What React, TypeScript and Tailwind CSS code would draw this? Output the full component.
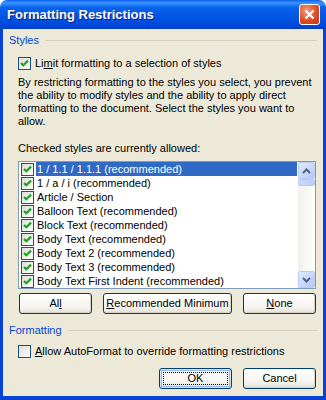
import React from 'react';

const styleRows = [
  '1 / 1.1 / 1.1.1 (recommended)',
  '1 / a / i (recommended)',
  'Article / Section',
  'Balloon Text (recommended)',
  'Block Text (recommended)',
  'Body Text (recommended)',
  'Body Text 2 (recommended)',
  'Body Text 3 (recommended)',
  'Body Text First Indent (recommended)',
];

const CheckBox = ({ checked }: { checked: boolean }) => (
  <span className="flex h-[13px] w-[13px] shrink-0 items-center justify-center border border-[#1C5180] bg-[linear-gradient(135deg,#DCDCD7,#ffffff)]">
    {checked ? (
      <svg width="11" height="11" viewBox="0 0 11 11">
        <path d="M2 5 L4.3 7.3 L9 2.6" fill="none" stroke="#21A121" strokeWidth="2.2" />
      </svg>
    ) : null}
  </span>
);

const GroupHeader = ({ label, className }: { label: string; className?: string }) => (
  <div className={`flex h-[13px] items-center ${className ?? ''}`}>
    <span className="leading-[13px] text-[#0046D5]">{label}</span>
    <span className="ml-[6px] h-px flex-1 bg-[#D0D0BF]" />
  </div>
);

const Button = ({ children, width, focused }: { children: React.ReactNode; width: string; focused?: boolean }) => (
  <button
    className={`relative flex h-[21px] ${width} items-center justify-center rounded-[3px] border border-[#003C74] bg-[linear-gradient(to_bottom,#ffffff,#F4F3EE_70%,#E3E1D6)] text-black ${
      focused ? 'shadow-[inset_0_0_0_1px_#CEE7FF,inset_0_0_0_2px_#95B6EE]' : 'shadow-[inset_-1px_-1px_0_#D6D0C5]'
    }`}
  >
    {focused ? <span className="absolute inset-[3px] border border-dotted border-black" /> : null}
    <span className="relative leading-[13px]">{children}</span>
  </button>
);

const ArrowBtn = ({ up }: { up: boolean }) => (
  <div className="flex h-[17px] w-[17px] items-center justify-center rounded-[2px] border border-[#B7CBF5] bg-[linear-gradient(135deg,#E1EAFE,#B5C8F7)]">
    <svg width="9" height="6" viewBox="0 0 9 6">
      <path d={up ? 'M1 5 L4.5 1.5 L8 5' : 'M1 1 L4.5 4.5 L8 1'} fill="none" stroke="#4D6185" strokeWidth="2" />
    </svg>
  </div>
);

export default function App() {
  return (
    <div className="flex h-[400px] w-[326px] flex-col font-['Liberation_Sans',Arial,sans-serif] text-[11px] text-black">
      <div className="flex h-[29px] shrink-0 items-center justify-between rounded-t-[7px] bg-[linear-gradient(to_bottom,#0A5FF0,#3D95FF_10%,#0864EC_25%,#0054E3_60%,#0047D8_90%,#003DC8)] pl-[7px] pr-[6px]">
        <span className="text-[13px] font-bold text-white [text-shadow:1px_1px_0_#0A1E80]">Formatting Restrictions</span>
        <div className="flex h-[21px] w-[21px] items-center justify-center rounded-[3px] border border-white bg-[radial-gradient(circle_at_35%_30%,#F29A7E,#E0471E_60%,#C3331A)]">
          <svg width="11" height="11" viewBox="0 0 11 11">
            <path d="M1.5 1.5 L9.5 9.5 M9.5 1.5 L1.5 9.5" stroke="#ffffff" strokeWidth="2.2" />
          </svg>
        </div>
      </div>

      <div className="flex flex-1 flex-col border-x-[3px] border-b-[4px] border-[#0842D2] bg-[#ECE9D8] px-[6px]">
        <GroupHeader label="Styles" className="mt-[5px]" />

        <div className="ml-[9px] mt-[10px] flex h-[13px] items-center gap-[4px]">
          <CheckBox checked />
          <span className="leading-[13px]">
            Li<u>m</u>it formatting to a selection of styles
          </span>
        </div>

        <p className="ml-[9px] mt-[6px] leading-[13px]">
          By restricting formatting to the styles you select, you prevent
          <br />
          the ability to modify styles and the ability to apply direct
          <br />
          formatting to the document. Select the styles you want to
          <br />
          allow.
        </p>

        <div className="ml-[9px] mt-[14px] leading-[13px]">Checked styles are currently allowed:</div>

        <div className="ml-[9px] mt-[6px] flex h-[128px] w-[298px] border border-[#7F9DB9] bg-white">
          <div className="flex flex-1 flex-col">
            {styleRows.map((row, i) => (
              <div key={row} className="flex h-[14px] items-center pl-[2px]">
                <CheckBox checked />
                <span
                  className={`ml-[2px] mr-px flex h-[14px] flex-1 items-center px-[1px] leading-[14px] ${
                    i === 0 ? 'bg-[#316AC5] text-white' : ''
                  }`}
                >
                  {row}
                </span>
              </div>
            ))}
          </div>
          <div className="flex w-[17px] flex-col bg-[linear-gradient(to_right,#F3F1EC,#FEFEFB)]">
            <ArrowBtn up />
            <div className="h-[7px] rounded-[2px] border border-[#B7CBF5] bg-[linear-gradient(to_right,#CAD8FC,#B7CBF7)]" />
            <div className="flex-1" />
            <ArrowBtn up={false} />
          </div>
        </div>

        <div className="ml-[10px] mt-[4px] flex gap-[11px]">
          <Button width="w-[73px]">
            Al<u>l</u>
          </Button>
          <Button width="w-[129px]">
            <u>R</u>ecommended Minimum
          </Button>
          <Button width="w-[73px]">
            <u>N</u>one
          </Button>
        </div>

        <GroupHeader label="Formatting" className="mt-[10px]" />

        <div className="ml-[9px] mt-[8px] flex h-[13px] items-center gap-[4px]">
          <CheckBox checked={false} />
          <span className="leading-[13px]">
            <u>A</u>llow AutoFormat to override formatting restrictions
          </span>
        </div>

        <div className="mr-px mt-[10px] flex justify-end gap-[11px]">
          <Button width="w-[73px]" focused>
            OK
          </Button>
          <Button width="w-[73px]">Cancel</Button>
        </div>
      </div>
    </div>
  );
}
